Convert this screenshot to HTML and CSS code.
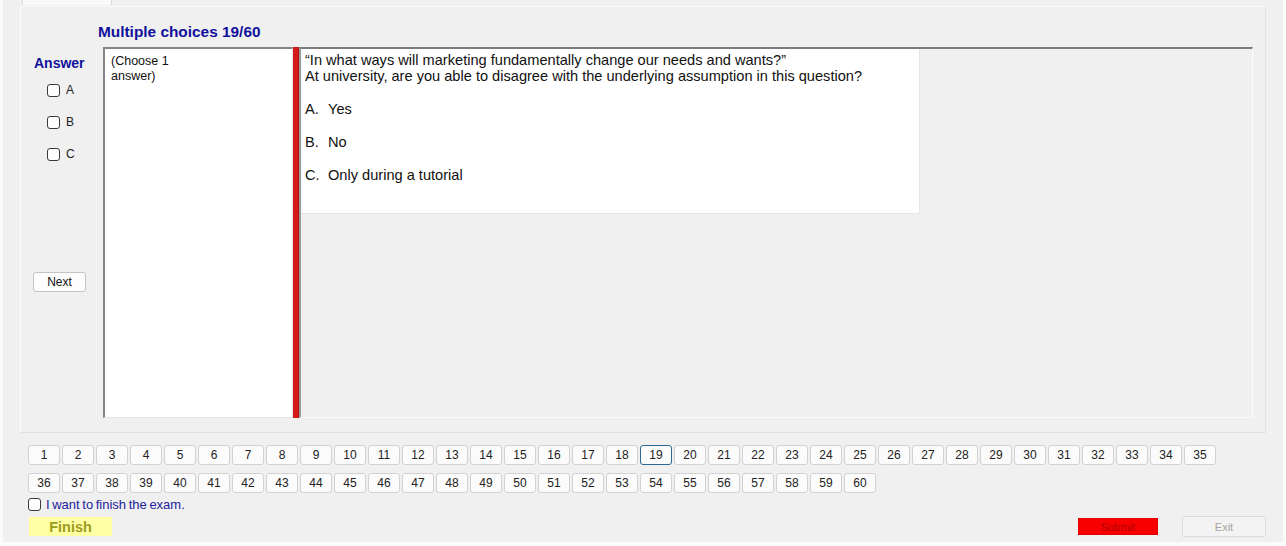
FILE: index.html
```html
<!DOCTYPE html>
<html>
<head>
<meta charset="utf-8">
<link rel="stylesheet" href="styles.css">
</head>
<body>
<div class="window">
  <div class="tabs"><div class="tab"></div></div>
  <div class="tabpage">
    <div class="title">Multiple choices 19/60</div>
    <div class="main">
      <div class="answer-col">
        <div class="answer-head">Answer</div>
        <label class="opt"><span class="cb"></span><span>A</span></label>
        <label class="opt"><span class="cb"></span><span>B</span></label>
        <label class="opt"><span class="cb"></span><span>C</span></label>
        <button class="next">Next</button>
      </div>
      <div class="choose"><div class="choose-text">(Choose 1 answer)</div></div>
      <div class="redbar"></div>
      <div class="question">
        <div class="qbox">
          <p class="qtext">“In what ways will marketing fundamentally change our needs and wants?”<br>At university, are you able to disagree with the underlying assumption in this question?</p>
          <p class="qopt"><span class="ql">A.</span>Yes</p>
          <p class="qopt"><span class="ql">B.</span>No</p>
          <p class="qopt"><span class="ql">C.</span>Only during a tutorial</p>
        </div>
      </div>
    </div>
  </div>
  <div class="nav">
    <button class="num">1</button><button class="num">2</button><button class="num">3</button><button class="num">4</button><button class="num">5</button><button class="num">6</button><button class="num">7</button><button class="num">8</button><button class="num">9</button><button class="num">10</button><button class="num">11</button><button class="num">12</button><button class="num">13</button><button class="num">14</button><button class="num">15</button><button class="num">16</button><button class="num">17</button><button class="num">18</button><button class="num current">19</button><button class="num">20</button><button class="num">21</button><button class="num">22</button><button class="num">23</button><button class="num">24</button><button class="num">25</button><button class="num">26</button><button class="num">27</button><button class="num">28</button><button class="num">29</button><button class="num">30</button><button class="num">31</button><button class="num">32</button><button class="num">33</button><button class="num">34</button><button class="num">35</button>
    <button class="num">36</button><button class="num">37</button><button class="num">38</button><button class="num">39</button><button class="num">40</button><button class="num">41</button><button class="num">42</button><button class="num">43</button><button class="num">44</button><button class="num">45</button><button class="num">46</button><button class="num">47</button><button class="num">48</button><button class="num">49</button><button class="num">50</button><button class="num">51</button><button class="num">52</button><button class="num">53</button><button class="num">54</button><button class="num">55</button><button class="num">56</button><button class="num">57</button><button class="num">58</button><button class="num">59</button><button class="num">60</button>
  </div>
  <label class="finish-check"><span class="cb"></span><span>I want to finish the exam.</span></label>
  <div class="bottom-bar">
    <button class="finish">Finish</button>
    <button class="submit">Submit</button>
    <button class="exit">Exit</button>
  </div>
</div>
</body>
</html>
```
FILE: styles.css
```css
html, body {
  margin: 0;
  padding: 0;
  background: #fbfbfb;
}
body {
  font-family: "Liberation Sans", Arial, sans-serif;
  color: #000;
}
.window {
  margin-left: 3px;
  width: 1280px;
  height: 542px;
  background: #f0f0f0;
  overflow: hidden;
}
.tabs {
  height: 6px;
  padding-left: 19px;
}
.tab {
  width: 88px;
  height: 5px;
  background: #f9f9f9;
  border-left: 1px solid #dadada;
  border-right: 1px solid #dadada;
}
.tabpage {
  margin-left: 17px;
  width: 1244px;
  height: 425px;
  border: 1px solid #fafafa;
  border-right-color: #e2e2e2;
  border-bottom-color: #e2e2e2;
}
.title {
  margin: 17px 0 0 77px;
  height: 16px;
  font-size: 15.4px;
  line-height: 16px;
  font-weight: bold;
  color: #10109c;
}
.main {
  margin-top: 7px;
  display: flex;
  height: 371px;
}
.answer-col {
  width: 82px;
  display: flex;
  flex-direction: column;
  align-items: flex-start;
}
.answer-head {
  margin: 8px 0 0 13px;
  font-size: 14px;
  line-height: 16px;
  font-weight: bold;
  color: #10109c;
}
.opt {
  display: flex;
  align-items: center;
  gap: 6px;
  height: 20px;
  margin-left: 26px;
  font-size: 12px;
  color: #222;
}
.answer-head + .opt { margin-top: 9px; }
.opt + .opt { margin-top: 12px; }
.cb {
  display: inline-block;
  width: 11px;
  height: 11px;
  border: 1px solid #3a3a3a;
  border-radius: 3px;
  background: #fff;
  flex: none;
}
.next {
  margin: 108px 0 0 12px;
  width: 53px;
  height: 20px;
  padding: 0;
  font-family: inherit;
  font-size: 12px;
  color: #111;
  background: #fdfdfd;
  border: 1px solid #c4c4c4;
  border-radius: 3px;
}
.choose {
  width: 187px;
  background: #fff;
  border-top: 2px solid #858585;
  border-left: 2px solid #858585;
  border-right: 1px solid #e4e4e4;
  border-bottom: 1px solid #e4e4e4;
}
.choose-text {
  width: 72px;
  padding: 5px 0 0 6px;
  font-size: 12.5px;
  line-height: 15px;
  color: #111;
}
.redbar {
  width: 6px;
  background: #d91a1a;
  border-right: 1px solid #b01010;
  box-sizing: border-box;
}
.question {
  width: 954px;
  border-top: 2px solid #7c7c7c;
  border-left: 2px solid #9c9c9c;
  border-right: 1px solid #fbfbfb;
  border-bottom: 1px solid #fbfbfb;
  box-sizing: border-box;
}
.qbox {
  width: 619px;
  height: 165px;
  background: #fff;
  border-right: 1px solid #e6e6e6;
  border-bottom: 1px solid #e6e6e6;
  padding: 3px 0 0 4px;
  box-sizing: border-box;
  font-size: 14.6px;
  line-height: 16px;
  color: #111;
}
.qtext { margin: 0; }
.qopt { margin: 17px 0 0 0; }
.ql {
  display: inline-block;
  width: 23px;
}
.nav {
  margin-top: 12px;
  padding-left: 25px;
  display: grid;
  grid-template-columns: repeat(35, 32px);
  column-gap: 2px;
  row-gap: 8px;
}
.num {
  height: 20px;
  padding: 0;
  font-family: inherit;
  font-size: 12px;
  color: #222;
  background: #fbfbfb;
  border: 1px solid #d2d2d2;
  border-radius: 3px;
}
.num.current {
  border-color: #2c6a94;
  background: #fcfcfc;
}
.finish-check {
  display: flex;
  align-items: center;
  gap: 5px;
  height: 14px;
  margin: 4px 0 0 25px;
  font-size: 13px;
  color: #22229a;
  word-spacing: -1px;
}
.bottom-bar {
  display: flex;
  align-items: center;
  height: 21px;
  margin-top: 5px;
  padding-left: 26px;
}
.finish {
  width: 83px;
  height: 19px;
  padding: 0;
  border: none;
  background: #ffffa4;
  font-family: inherit;
  font-size: 14.5px;
  font-weight: bold;
  color: #9c9c1c;
  margin-right: auto;
}
.submit {
  width: 80px;
  height: 17px;
  padding: 0;
  border: 1px solid #e00000;
  background: #f80000;
  font-family: inherit;
  font-size: 11px;
  color: #b00000;
  margin-right: 24px;
}
.exit {
  width: 84px;
  height: 21px;
  padding: 0;
  border: 1px solid #dcdcdc;
  border-radius: 2px;
  background: #f3f3f3;
  font-family: inherit;
  font-size: 11px;
  color: #a6a6a6;
  margin-right: 17px;
}
```
